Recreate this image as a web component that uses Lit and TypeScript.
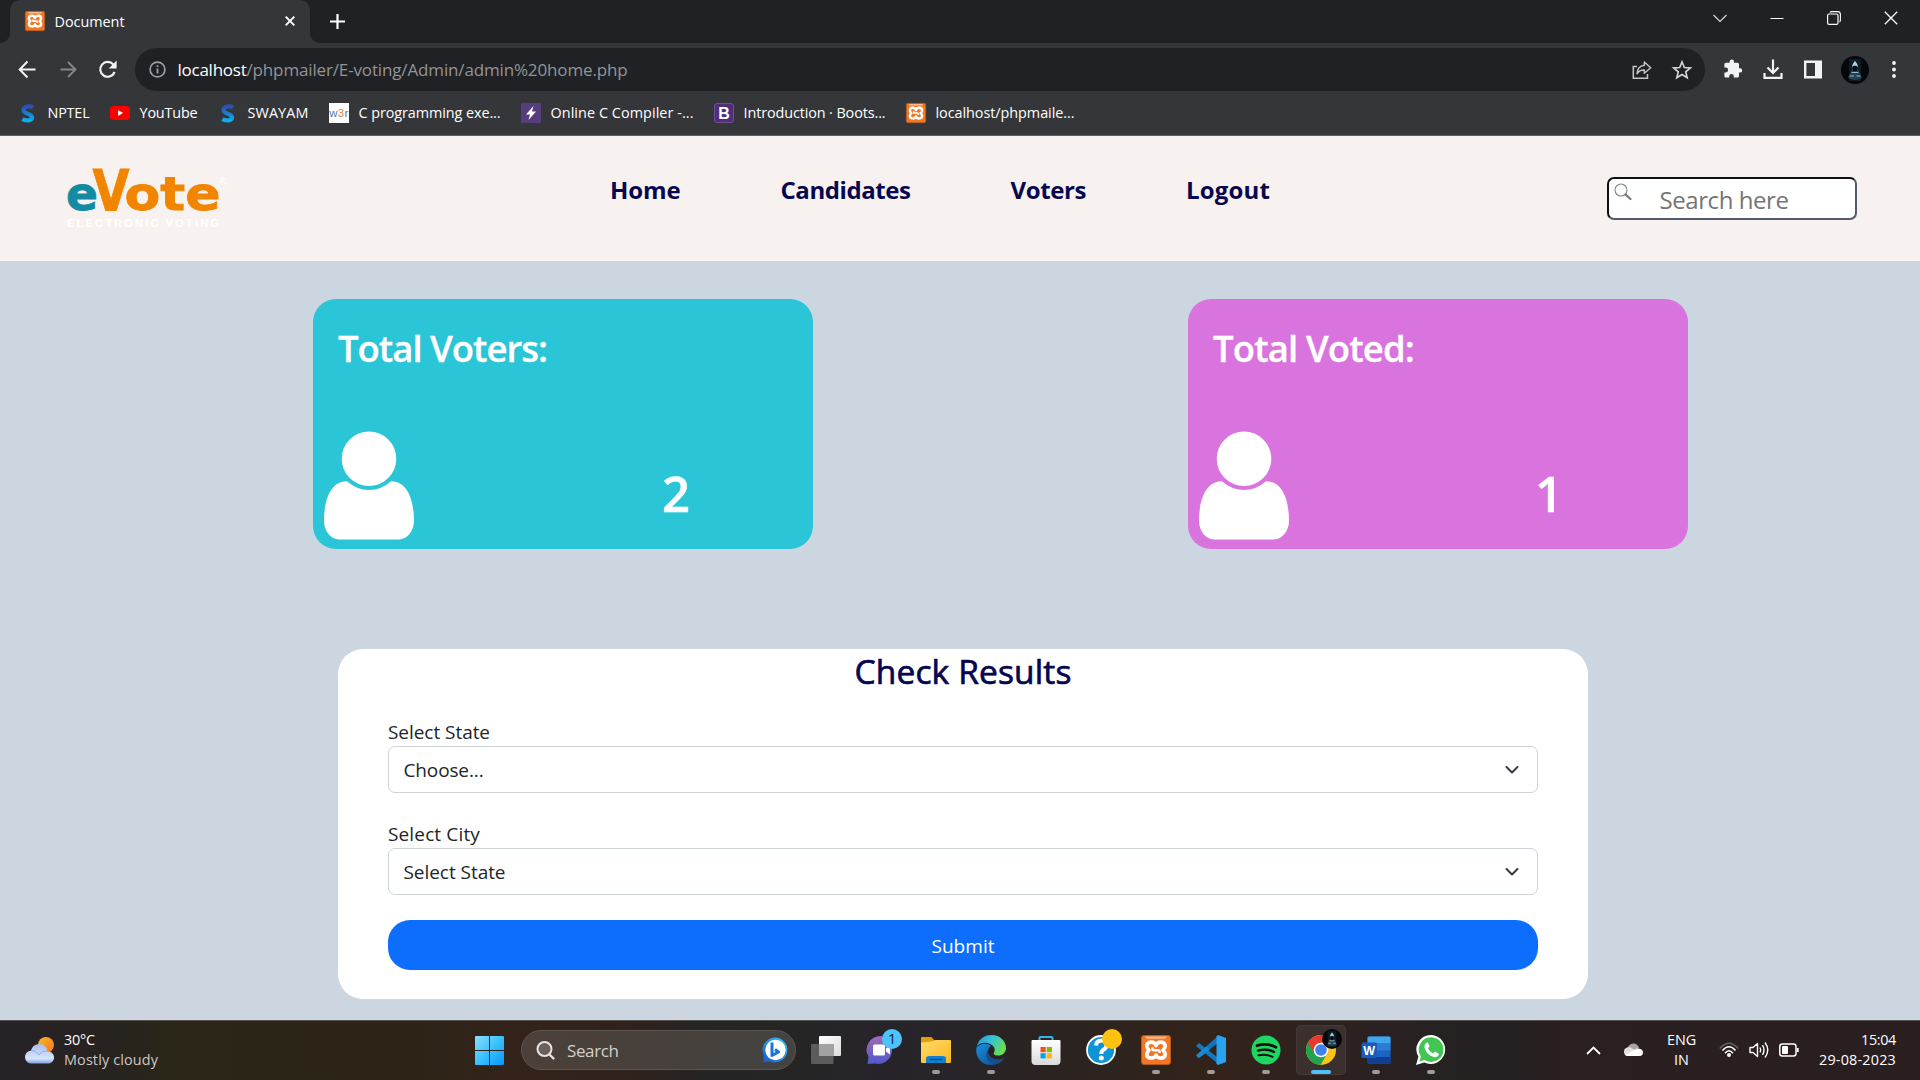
import { LitElement, html, css, svg, nothing } from "lit";
import { customElement, property } from "lit/decorators.js";

/** One line of text whose tracking is tuned so that it fills a set width. */
@customElement("fit-text")
class FitText extends LitElement {
  @property({ type: Number }) w = 0;
  @property() text = "";
  static styles = css`
    :host { display: inline-block; white-space: pre; flex: none; }
  `;
  render() { return html`<span class="t">${this.text}</span>`; }
  updated() {
    const span = this.renderRoot.querySelector(".t") as HTMLElement;
    span.style.letterSpacing = "0px";
    const natural = span.getBoundingClientRect().width;
    span.style.letterSpacing = `${(this.w - natural) / this.text.length}px`;
    this.style.width = `${this.w}px`;
  }
}

const t = (text: string, w: number, cls = "") =>
  html`<fit-text class=${cls} .text=${text} .w=${w}></fit-text>`;

const icon = (w: number, h: number, body: unknown, cls = "") =>
  html`<svg class="ic ${cls}" width=${w} height=${h} viewBox="0 0 ${w} ${h}">${body}</svg>`;

const xampp = (size: number) => html`
  <svg class="ic" width=${size} height=${size} viewBox="0 0 30 30">
    <rect x="0.5" y="0.5" width="29" height="29" rx="2.5" fill="#f37623" stroke="#b65a1c"/>
    <path d="M4 1.5h22l-2 2.2H6z" fill="#f9b98d"/>
    <path d="M15 10.6C13.5 5.6 5.8 6.2 5.8 11.2C5.8 13 7 14 8 15.2C7 16.4 5.8 17.4 5.8 19.2C5.8 24.2 13.5 24.4 15 20C16.5 24.4 24.2 24.2 24.2 19.2C24.2 17.4 23 16.4 22 15.2C23 14 24.2 13 24.2 11.2C24.2 6.2 16.5 5.6 15 10.6Z" fill="none" stroke="#fff" stroke-width="3.6" stroke-linejoin="round"/>
    <path d="M11.4 12.3v1.6q0 1.3 1.3 1.3h4.6q1.3 0 1.3 1.3v1.6" fill="none" stroke="#fff" stroke-width="2.4"/>
  </svg>`;

const swayam = () => icon(20, 20, svg`
  <defs><linearGradient id="sg" x1="0" y1="0" x2="0" y2="1"><stop offset="0" stop-color="#2f4bb5"/><stop offset=".5" stop-color="#1580d0"/><stop offset="1" stop-color="#0cb0ee"/></linearGradient></defs>
  <path d="M15 4.200C12 2.400 5.600 3.200 5.600 7C5.600 11 14 10.200 14 14.200C14 17.800 8 18.200 4.400 16.200" fill="none" stroke="url(#sg)" stroke-width="4.2"/>`);

const hooded = (r: number) => svg`
  <circle cx=${r} cy=${r} r=${r} fill="#05070b"/>
  <g transform="scale(${r / 14})">
    <rect x="8" y="3" width="12" height="22" fill="#0f1c27"/>
    <path d="M14 4.5C11.500 7 10.500 11 10.800 14L7 22Q14 26 21 22L17.200 14C17.500 11 16.500 7 14 4.5Z" fill="#24424f"/>
    <path d="M14 5Q11.500 7.500 11 11Q14 8 17 11Q16.500 7.500 14 5Z" fill="#a9d4e3"/>
    <path d="M11.500 11Q14 9 16.500 11L16 15H12Z" fill="#05070b"/>
    <path d="M10.500 16.500h7M8.500 20h4.500M15.500 20h4" stroke="#8bb7c9" stroke-width="1.200"/>
  </g>`;

const person = () => icon(92, 90, svg`
  <circle cx="46" cy="27.800" r="27.300" fill="#fff"/>
  <path d="M24 50.200C8 50.200 1 68 1 90C1 100 8 108.500 16 108.500H76C84 108.500 91 100 91 90C91 68 84 50.200 68 50.200Q58 59 46 59Q34 59 24 50.200Z" fill="#fff"/>`, "person");

const chevron = () => icon(16, 10, svg`<path d="M2.500 2L8 7.500L13.500 2" fill="none" stroke="#343a40" stroke-width="2" stroke-linecap="round" stroke-linejoin="round"/>`);

@customElement("app-root")
class AppRoot extends LitElement {
  static styles = css`
    :host { display: block; width: 1920px; height: 1080px; overflow: hidden; font-family: "Open Sans", "Noto Sans", sans-serif; }
    * { box-sizing: border-box; }
    .ic { display: block; flex: none; overflow: visible; }
    .page { display: flex; flex-direction: column; height: 1080px; background: #ccd6e0; }

    .browser { height: 136px; flex: none; background: #35363a; border-bottom: 1px solid #5f6064; color: #fff; }
    .tabs { height: 43px; background: #202124; display: flex; align-items: flex-start; }
    .lip { width: 10px; height: 43px; background: #35363a; flex: none; }
    .lip i { display: block; height: 43px; background: #202124; }
    .lip.l i { border-bottom-right-radius: 10px; }
    .lip.r i { border-bottom-left-radius: 10px; }
    .tab { width: 300px; height: 43px; background: #35363a; border-radius: 10px 10px 0 0; display: flex; align-items: center; padding: 0 15px 1px; font-size: 14.4px; }
    .tab fit-text { margin-left: 9.500px; }
    .tab .close { margin-left: auto; }
    .plus { margin: 14px 0 0 10px; }
    .win { margin-left: auto; display: flex; height: 36px; align-items: center; padding-right: 22px; gap: 43px; }
    .bar { height: 53px; display: flex; align-items: center; padding: 0 20px 0 17px; }
    .bar > .nav { display: flex; gap: 20.500px; width: 118px; flex: none; }
    .omni { width: 1570px; flex: none; height: 43px; border-radius: 22px; background: #202124; display: flex; align-items: center; padding: 0 13px 0 14px; font-size: 17px; }
    .omni .host { margin-left: 11.500px; }
    .omni .path { color: #929496; }
    .omni .share { margin-left: auto; margin-right: 20px; }
    .acts { display: flex; align-items: center; gap: 20px; margin-left: 18px; }
    .acts .face { margin-left: -2px; margin-right: 2px; }
    .acts .dots { margin-left: -2px; }
    .marks { height: 33px; display: flex; align-items: center; gap: 20px; padding-left: 18px; font-size: 14.400px; }
    .mark { display: flex; align-items: center; gap: 10px; }
    .mark fit-text { margin: 0 .5px 0 -.5px; }

    .top { height: 125px; flex: none; background: #f7f2ef; display: flex; padding: 0 63px 0 65px; }
    .logo { margin-top: 30px; }
    .menu { display: flex; gap: 100px; margin: 33.500px 0 0 375px; font-size: 24px; font-weight: 700; line-height: 40px; color: #07074f; }
    .search { margin: 41px 0 0 auto; width: 250px; height: 43px; background: #fff; border: 2.500px solid; border-color: #101014 #555a70 #555a70 #101014; border-radius: 7px; display: flex; font-size: 24px; color: #757575; }
    .search .ic { margin: 4px 0 0 5px; }
    .search fit-text { margin-left: 27.500px; line-height: 41px; }

    .stats { display: flex; gap: 375px; margin: 38px 0 0 313px; }
    .card { width: 500px; height: 250px; border-radius: 23px; color: #fff; padding: 23px 0 0 25px; font-weight: 600; display: flex; flex-direction: column; }
    .cyan { background: #2bc5d8; }
    .pink { background: #d974df; }
    .card .title { font-size: 36.500px; line-height: 53px; -webkit-text-stroke: .3px #fff; }
    .row { display: flex; margin-top: 56px; }
    .person { margin-left: -15px; }
    .num { font-size: 49px; line-height: 70px; margin: 26.500px 0 0 247px; -webkit-text-stroke: .5px #fff; }
    .pink .num { margin-left: 245px; }

    .results { margin: 100px 0 0 338px; width: 1250px; height: 350px; border-radius: 25px; background: #fff; padding: 1px 50px 0; display: flex; flex-direction: column; color: #212529; font-size: 19px; }
    .head { display: flex; justify-content: center; font-size: 33.500px; line-height: 43px; color: #07074f; height: 67px; -webkit-text-stroke: .7px #07074f; }
    .head fit-text { height: 43px; }
    .label { line-height: 30px; height: 29px; }
    .select { height: 47px; border: 1px solid #ced4da; border-radius: 7px; display: flex; align-items: center; justify-content: space-between; padding: 0 17px 0 14.500px; margin-bottom: 26px; }
    .select + .submit { margin-top: -1px; }
    .submit { height: 50px; border-radius: 22px; background: #0d6efd; color: #fff; display: flex; align-items: center; justify-content: center; padding-top: 2px; }

    .task { margin-top: auto; height: 60px; flex: none; border-top: 1px solid #55524f; display: flex; align-items: center; color: #fff; font-size: 14.400px; padding-bottom: 1px;
      background: linear-gradient(90deg, #272227 0, #27231f 110px, #2a2618 170px, #2c2417 400px, #33231a 500px, #30221c 630px, #252424 700px, #252526 800px, #27242a 930px, #2b2320 1060px, #33231a 1210px, #2c2120 1340px, #262222 1440px, #252122 1520px, #2a1f21 1560px, #291e20 100%); }
    .weather { display: flex; align-items: center; padding-left: 25px; width: 475px; gap: 9px; }
    .stack { display: flex; flex-direction: column; line-height: 20px; }
    .task .stack { margin-top: -1px; }
    .dim { color: #ccc8c4; }
    .find { width: 275px; height: 40px; border-radius: 20px; margin: 0 15px 0 17px; border: 1px solid #5d5550; background: linear-gradient(90deg, #4c4039, #47403c 50%, #444341); display: flex; align-items: center; padding: 0 7px 0 14px; font-size: 17px; color: #d3cfcc; }
    .find fit-text { margin-left: 12px; }
    .find .bing { margin-left: auto; }
    .apps { display: flex; gap: 5px; margin-left: -10px; }
    .app { width: 50px; height: 50px; border-radius: 5px; display: flex; flex-direction: column; align-items: center; padding-top: 10px; position: relative; }
    .app.on { background: #3b302d; box-shadow: inset 0 0 0 1px #453a37; }
    .dot { width: 8px; height: 4px; border-radius: 2px; background: #a09b9a; margin-top: 5px; }
    .dot.wide { width: 20px; background: #4cc2ff; }
    .badge { position: absolute; left: 26px; top: 4px; width: 20px; height: 20px; border-radius: 50%; display: flex; align-items: center; justify-content: center; line-height: 20px; font-weight: 400; }
    .badge.blue { background: #4cc2ff; color: #10222c; }
    .badge.gold { background: #ffc20e; }
    .tray { margin-left: auto; display: flex; align-items: center; padding-right: 24px; }
    .lang { align-items: center; margin: 0 23px; }
    .net { display: flex; gap: 10px; align-items: center; }
    .clock { align-items: flex-end; margin-left: 20px; }
  `;

  private mark(ic: unknown, label: string, w: number) {
    return html`<div class="mark">${ic}${t(label, w)}</div>`;
  }

  private browser() {
    return html`<div class="browser">
      <div class="tabs">
        <div class="lip l"><i></i></div>
        <div class="tab">${xampp(20)}${t("Document", 70)}
          ${icon(10, 10, svg`<path d="M.7.7L9.300 9.300M9.300.7L.7 9.300" stroke="#fff" stroke-width="1.900"/>`, "close")}
        </div>
        <div class="lip r"><i></i></div>
        ${icon(15, 15, svg`<path d="M7.500 0V15M0 7.500H15" stroke="#fff" stroke-width="2.200"/>`, "plus")}
        <div class="win">
          ${icon(14, 14, svg`<path d="M.5 4L7 10.500L13.500 4" fill="none" stroke="#ddd" stroke-width="1.100"/>`)}
          ${icon(14, 14, svg`<path d="M.5 7.500H13.500" stroke="#fff"/>`)}
          ${icon(14, 14, svg`<rect x=".6" y="3" width="10.400" height="10.400" rx="1.500" fill="none" stroke="#fff" stroke-width="1.200"/><path d="M3 1.500Q3.400.6 5 .6H10.500Q13.400.6 13.400 3.500V9Q13.400 10.600 12.500 11" fill="none" stroke="#fff" stroke-width="1.100"/>`)}
          ${icon(14, 14, svg`<path d="M.8.8L13.200 13.200M13.200.8L.8 13.200" stroke="#fff" stroke-width="1.300"/>`)}
        </div>
      </div>
      <div class="bar">
        <div class="nav">
          ${icon(20, 20, svg`<path d="M18.500 9.500H3M10.500 1.500L2.700 9.500L10.500 17.500" fill="none" stroke="#f1f3f4" stroke-width="2"/>`)}
          ${icon(20, 20, svg`<path d="M2.500 9.500H17M10 2L17.500 9.500L10 17" fill="none" stroke="#85868a" stroke-width="1.900"/>`)}
          ${icon(20, 20, svg`<path d="M16.600 12A7.400 7.400 0 1 1 15.300 4.500L17 6.200" fill="none" stroke="#f1f3f4" stroke-width="2.200"/><path d="M18.600.5V8.500H10.800Z" fill="#f1f3f4"/>`)}
        </div>
        <div class="omni">
          ${icon(17, 17, svg`<circle cx="8.500" cy="8.500" r="7.400" fill="none" stroke="#9aa0a6" stroke-width="1.700"/><path d="M8.500 7.500V12.600M8.500 4.300V6.100" stroke="#9aa0a6" stroke-width="1.800"/>`)}
          ${t("localhost", 69, "host")}${t("/phpmailer/E-voting/Admin/admin%20home.php", 381, "path")}
          ${icon(20, 20, svg`<path d="M5 6.500H1.300V18.300H15.500V14" fill="none" stroke="#c4c7c9" stroke-width="1.500"/><path d="M12.300 2L18.700 7.700L12.300 13.200V10Q7.500 9.800 5 13.800Q5.500 6 12.300 5.200Z" fill="none" stroke="#c4c7c9" stroke-width="1.400" stroke-linejoin="round"/>`, "share")}
          ${icon(20, 20, svg`<path d="M10 1.800L12.300 7.500L18.400 7.900L13.700 11.800L15.200 17.800L10 14.500L4.800 17.800L6.300 11.800L1.600 7.900L7.700 7.500Z" fill="none" stroke="#d5d7d9" stroke-width="1.600"/>`)}
        </div>
        <div class="acts">
          ${icon(20, 20, svg`<path d="M17 8.200h-1V4.300q0-1.500-1.500-1.500H11V1.700a2.200 2.200 0 0 0-4.400 0V2.800H2.900Q1.400 2.800 1.400 4.300V7.600H2.700a2.400 2.400 0 0 1 0 4.800H1.400V16q0 1.500 1.500 1.500H6.200V16.200a2.300 2.300 0 0 1 4.600 0v1.300h3.700q1.500 0 1.500-1.500V12.600h1a2.200 2.200 0 0 0 0-4.400Z" fill="#f1f3f4"/>`)}
          ${icon(20, 20, svg`<path d="M10-.5V12.500M4.500 7.500L10 13L15.500 7.500" fill="none" stroke="#f1f3f4" stroke-width="2.200"/><path d="M1.500 13V17.800H18.500V13" fill="none" stroke="#f1f3f4" stroke-width="2.200"/>`)}
          ${icon(20, 20, svg`<path d="M1 .5H19V18.500H1ZM3.400 2.900V16.100H12V2.900Z" fill="#f1f3f4" fill-rule="evenodd"/>`)}
          ${icon(28, 28, hooded(14), "face")}
          ${icon(10, 20, svg`<g fill="#f1f3f4"><circle cx="5" cy="3" r="1.900"/><circle cx="5" cy="9.500" r="1.900"/><circle cx="5" cy="16" r="1.900"/></g>`, "dots")}
        </div>
      </div>
      <div class="marks">
        ${this.mark(swayam(), "NPTEL", 42)}
        ${this.mark(icon(20, 20, svg`<rect x="0" y="3" width="20" height="14" rx="3.500" fill="#f00"/><path d="M8 7L13 10L8 13Z" fill="#fff"/>`), "YouTube", 58)}
        ${this.mark(swayam(), "SWAYAM", 61)}
        ${this.mark(icon(20, 20, svg`<rect width="20" height="20" fill="#fff"/><text y="14" font-family="Liberation Sans" font-size="11.500" fill="#4d79b0"><tspan x=".3">w</tspan><tspan x="8.800" fill="#f08040">3</tspan><tspan x="15.500">r</tspan></text>`), "C programming exe...", 142)}
        ${this.mark(icon(20, 20, svg`<rect width="20" height="20" fill="#563d7c"/><path d="M12.500 3L5 11.500H9L7.500 17L15 8.500H11Z" fill="#fff"/>`), "Online C Compiler -...", 143)}
        ${this.mark(icon(20, 20, svg`<rect x=".5" y=".5" width="19" height="19" rx="2.500" fill="#4f2f7c" stroke="#6b5190"/><text x="10" y="15.500" text-anchor="middle" font-family="Liberation Sans" font-weight="700" font-size="16" fill="#fff">B</text>`), "Introduction · Boots...", 142)}
        ${this.mark(xampp(20), "localhost/phpmaile...", 139)}
      </div>
    </div>`;
  }

  private header() {
    return html`<header class="top">
      ${icon(170, 65, svg`
        <g font-family="DejaVu Sans" font-weight="700" stroke-width=".8">
          <text x="1" y="44.200" font-size="46" textLength="32" lengthAdjust="spacingAndGlyphs" fill="#138ca3" stroke="#138ca3">e</text>
          <text x="27.500" y="44.500" font-size="56.500" textLength="37" lengthAdjust="spacingAndGlyphs" fill="#f28500" stroke="#f28500">V</text>
          <text x="59.500" y="44.200" font-size="46" textLength="96" lengthAdjust="spacingAndGlyphs" fill="#f28500" stroke="#f28500">ote</text>
        </g>
        <text x="2" y="60.500" font-family="Liberation Sans Narrow, Liberation Sans" font-weight="700" font-size="11" textLength="152" fill="#fff">ELECTRONIC VOTING</text>
        <text x="154" y="18.500" font-family="Liberation Sans" font-size="11" fill="#fff">®</text>`, "logo")}
      <nav class="menu">${t("Home", 70.5)}${t("Candidates", 130)}${t("Voters", 75.5)}${t("Logout", 84)}</nav>
      <div class="search">
        ${icon(18, 18, svg`<circle cx="7" cy="7" r="6" fill="none" stroke="#858585" stroke-width="1.100"/><path d="M11.500 11.500L16.500 16" stroke="#777" stroke-width="2.200" stroke-linecap="round"/>`)}
        ${t("Search here", 129)}
      </div>
    </header>`;
  }

  private card(kind: string, title: string, w: number, n: string) {
    return html`<section class="card ${kind}">
      ${t(title, w, "title")}
      <div class="row">${person()}<span class="num">${n}</span></div>
    </section>`;
  }

  private app(body: unknown, dot = "", badge: unknown = nothing) {
    return html`<div class="app ${dot === "wide" ? "on" : ""}">
      ${icon(30, 30, body)}
      ${dot ? html`<i class="dot ${dot}"></i>` : nothing}${badge}
    </div>`;
  }

  private taskbar() {
    return html`<footer class="task">
      <div class="weather">
        ${icon(30, 30, svg`
          <defs><linearGradient id="cl" x1="0" y1="0" x2="0" y2="1"><stop offset="0" stop-color="#a9c0ef"/><stop offset=".75" stop-color="#d7e4fa"/><stop offset="1" stop-color="#7d9fe0"/></linearGradient>
          <linearGradient id="su" x1="0" y1="0" x2="1" y2="1"><stop offset="0" stop-color="#fbb52c"/><stop offset="1" stop-color="#f5761a"/></linearGradient></defs>
          <circle cx="21" cy="10" r="8" fill="url(#su)"/>
          <path d="M7 28.500a6.500 6.500 0 0 1-1-13A8.500 8.500 0 0 1 21 12.500q1.500 2 1 4a6 6 0 0 1 2 12Z" fill="url(#cl)"/>
          <path d="M6 15.500q5-.5 8 4.500q3-5 8-4" fill="none" stroke="#8fabe6" stroke-width=".9"/>`)}
        <div class="stack">${t("30°C", 31)}${t("Mostly cloudy", 94, "dim")}</div>
      </div>
      ${icon(29, 29, svg`
        <defs><linearGradient id="wi" gradientUnits="userSpaceOnUse" x1="0" y1="0" x2="29" y2="29"><stop offset="0" stop-color="#8fdcff"/><stop offset=".5" stop-color="#39c2fc"/><stop offset="1" stop-color="#0a94fa"/></linearGradient></defs>
        <path d="M1 0H14V14H0V1Q0 0 1 0ZM15 0H28Q29 0 29 1V14H15ZM0 15H14V29H1Q0 29 0 28ZM15 15H29V28Q29 29 28 29H15Z" fill="url(#wi)"/>`)}
      <div class="find">
        ${icon(19, 19, svg`<circle cx="8.500" cy="8" r="7" fill="#6b605a" stroke="#e6e4e2" stroke-width="2"/><path d="M13.500 13.500L17.500 17.500" stroke="#e6e4e2" stroke-width="2.400" stroke-linecap="round"/>`)}
        ${t("Search", 51.5)}
        ${icon(26, 26, svg`
          <defs><linearGradient id="bi" x1="1" y1="0" x2="0" y2="1"><stop offset="0" stop-color="#35c8f2"/><stop offset="1" stop-color="#1a53cf"/></linearGradient></defs>
          <path d="M13 .5A12.500 12.500 0 1 1 8 24.500L.8 25.500L2 19A12.500 12.500 0 0 1 13 .5Z" fill="url(#bi)"/><circle cx="13.500" cy="13" r="10.200" fill="#fff"/>
          <path d="M10 5.500V18.500L16.500 15L13 12.500" fill="none" stroke="#1b73dd" stroke-width="3" stroke-linejoin="round"/>`, "bing")}
      </div>
      <div class="apps">
        ${this.app(svg`
          <defs><linearGradient id="tv" x1="0" y1="0" x2="1" y2="1"><stop offset="0" stop-color="#fff"/><stop offset="1" stop-color="#dcdcdc"/></linearGradient></defs>
          <rect x="8" y="1" width="22" height="20" rx="1" fill="url(#tv)"/><rect x="0" y="9" width="22.500" height="20" rx="1" fill="#5c5c5c"/><rect x="8" y="9" width="14.500" height="12" fill="#a2a2a2"/>`)}
        ${this.app(svg`
          <defs><linearGradient id="ch" x1="0" y1="0" x2="0" y2="1"><stop offset="0" stop-color="#a06ab4"/><stop offset="1" stop-color="#5059c9"/></linearGradient></defs>
          <path d="M15 1A14 14 0 1 1 9 28.600L1.500 29L2.500 22A14 14 0 0 1 15 1Z" fill="url(#ch)"/>
          <rect x="7" y="9.500" width="12" height="11" rx="1.500" fill="#fff"/><path d="M20 13.500L24 10.500V19.500L20 16.500Z" fill="#fff"/>`, "", html`<b class="badge blue">${t("1", 8)}</b>`)}
        ${this.app(svg`
          <defs><linearGradient id="fo" x1="0" y1="0" x2="1" y2="1"><stop offset="0" stop-color="#ffda6b"/><stop offset="1" stop-color="#fbb81a"/></linearGradient></defs>
          <path d="M0 3Q0 2 1 2H10.500L13 5V9H0Z" fill="#e29d0b"/><path d="M0 7.500L11 6.500L14 5H29Q30 5 30 6V27Q30 28 29 28H1Q0 28 0 27Z" fill="url(#fo)"/>
          <path d="M5 28V24Q5 21 8 21H22Q25 21 25 24V28Z" fill="#1180d2"/><path d="M9 24.500H21" stroke="#0a4f93" stroke-width="1.500"/>`, "d")}
        ${this.app(svg`
          <defs><linearGradient id="e1" x1="0" y1="0" x2="1" y2=".5"><stop offset="0" stop-color="#2593dd"/><stop offset=".5" stop-color="#35c1d8"/><stop offset="1" stop-color="#67df52"/></linearGradient>
          <linearGradient id="e2" x1="0" y1="0" x2="1" y2="1"><stop offset="0" stop-color="#1a8edb"/><stop offset="1" stop-color="#0c4a92"/></linearGradient></defs>
          <path d="M.5 12C3 3 9 0 15.500 0C24 0 30 6 30 13C30 18 26 20.500 22 20.500C18.500 20.500 17 19 18 17.500C20 14 18 9.500 11.500 8C6 7 2 9 .5 12Z" fill="url(#e1)"/>
          <path d="M.3 13C3 8 12 7.500 15 11C11 13 10 22 17 25C21.500 26.500 25 25 28 23C25 28 20 30 15 30C6 30-.7 23 .3 13Z" fill="url(#e2)"/>
          <path d="M11.500 15C8 21 12 29 19 29.500C23 28.500 26.500 26 28 23C22 26 12 24 11.500 15Z" fill="#174d8b"/>`, "d")}
        ${this.app(svg`
          <defs><linearGradient id="st" x1="0" y1="0" x2="0" y2="1"><stop offset="0" stop-color="#fff"/><stop offset="1" stop-color="#dadada"/></linearGradient></defs>
          <path d="M8.500 7V3Q8.500 2 9.500 2H20.500Q21.500 2 21.500 3V7" fill="none" stroke="#35b3ee" stroke-width="2"/>
          <path d="M.5 6Q.5 5 1.500 5H28.500Q29.500 5 29.500 6V26Q29.500 30 25.500 30H4.500Q.5 30 .5 26Z" fill="url(#st)"/>
          <rect x="9.500" y="12" width="5.200" height="5.200" fill="#f25022"/><rect x="15.700" y="12" width="5.200" height="5.200" fill="#7fba00"/><rect x="9.500" y="18.200" width="5.200" height="5.200" fill="#00a4ef"/><rect x="15.700" y="18.200" width="5.200" height="5.200" fill="#ffb900"/>`)}
        ${this.app(svg`<circle cx="15" cy="15" r="14" fill="#0b95d6" stroke="#fff" stroke-width="1.800"/><path d="M10 10.500Q10.500 5.500 15.500 5.500Q20.500 5.500 20.500 10Q20.500 13 17.500 14.700Q15.300 16 15.300 19" fill="none" stroke="#fff" stroke-width="4"/><circle cx="15.300" cy="23" r="2.500" fill="#fff"/>`, "", html`<b class="badge gold"></b>`)}
        <div class="app">${xampp(30)}<i class="dot"></i></div>
        ${this.app(svg`
          <path d="M0 11L3 8L23 23.500V29.500Z" fill="#1278c0"/><path d="M0 20.500L3 23L23 7V0Z" fill="#0e74bd"/><path d="M0 20.500L3 23L14 14.500L10 11.500Z" fill="#1b8ad6"/>
          <path d="M22 0L30 3V27L22 30L20.500 28.500V1.500Z" fill="#27a3f0"/>`, "d")}
        ${this.app(svg`<circle cx="15" cy="15" r="14.500" fill="#1ed760"/><g fill="none" stroke="#111" stroke-linecap="round"><path d="M6 10.700Q15.500 7.500 25 12.200" stroke-width="2.800"/><path d="M7 15.700Q15.500 13 23 17" stroke-width="2.400"/><path d="M7.500 20.300Q15 18.500 21.500 21.800" stroke-width="2"/></g>`, "d")}
        ${this.app(svg`
          <circle cx="15" cy="15" r="15" fill="#fcc31e"/>
          <path d="M15 15L2 7.500A15 15 0 0 0 14.500 30L22 17Z" fill="#1fa350"/>
          <path d="M2 7.500A15 15 0 0 1 28 7.500H15L8.500 18.700Z" fill="#e8392c"/>
          <circle cx="15" cy="15" r="7.300" fill="#fff"/><circle cx="15" cy="15" r="5.800" fill="#3f80ee"/>
          <g transform="translate(16 -6)">${hooded(10)}</g>`, "wide")}
        ${this.app(svg`
          <rect x="6.500" y="1.500" width="23" height="27" rx="1.500" fill="#1d63c4"/><path d="M6.500 3Q6.500 1.500 8 1.500H28Q29.500 1.500 29.500 3V8.500H6.500Z" fill="#41a5ee"/><rect x="6.500" y="8.500" width="23" height="7" fill="#2b7cd3"/><path d="M6.500 22H29.500V27Q29.500 28.500 28 28.500H8Q6.500 28.500 6.500 27Z" fill="#103f91"/>
          <rect x=".5" y="7.500" width="15.500" height="15.500" rx="1.500" fill="#185abd"/><text x="8.200" y="19.500" text-anchor="middle" font-family="Liberation Sans" font-weight="700" font-size="12.500" fill="#fff">W</text>`, "d")}
        ${this.app(svg`
          <path d="M15.500 0A14.500 14.500 0 1 1 8.300 27.500L0 30L2.400 21.800A14.500 14.500 0 0 1 15.500 0Z" fill="#fff"/>
          <path d="M15.500 2.300A12.300 12.300 0 1 1 8.600 25L3.300 26.600L4.900 21.500A12.300 12.300 0 0 1 15.500 2.300Z" fill="#43c553"/>
          <path d="M11 7.500Q8 9 8.500 12.500Q10.500 20 18.500 22.300Q22 22.300 23 19L19 16.500L17 18.500Q13.500 17 12 13.300L13.500 11.500L12 7.500Z" fill="#fff"/>`, "d")}
      </div>
      <div class="tray">
        ${icon(15, 9, svg`<path d="M1 8L7.500 1.500L14 8" fill="none" stroke="#fff" stroke-width="1.800"/>`)}
        <svg class="ic" width="43" height="14" viewBox="-22 0 43 14">
          <path d="M4 7Q5.500 0 11 .5Q15 1 16 5L10 9Z" fill="#a8a4a5"/><path d="M4 13A4.500 4.500 0 0 1 4 4.500Q6 3.500 8.500 5L19 11Q18 13 16 13Z" fill="#e0dedf"/><path d="M2 12L14 5.500Q20 5.500 20 9.500Q20 13 16 13H4Z" fill="#fff"/>
        </svg>
        <div class="stack lang">${t("ENG", 29)}${t("IN", 15)}</div>
        <div class="net">
          ${icon(20, 16, svg`<g fill="none" stroke="#fff" stroke-width="1.500"><path d="M.8 6.500Q10-4 19.200 6.500" stroke="#6a6061"/><path d="M3.500 8.500Q10 1 16.500 8.500"/><path d="M6 11.200Q10 6.500 14 11.200"/></g><circle cx="10" cy="13" r="2" fill="#fff"/>`)}
          ${icon(20, 18, svg`<path d="M1 6.500H4L8.500 2.500V15.500L4 11.500H1Z" fill="none" stroke="#fff" stroke-width="1.400" stroke-linejoin="round"/><path d="M11 6.500Q12.500 9 11 11.500M13.500 4.200Q16.500 9 13.500 13.800M16 1.500Q21.500 9 16 16.500" fill="none" stroke="#fff" stroke-width="1.400"/>`)}
          ${icon(20, 14, svg`<rect x=".8" y=".9" width="16.200" height="12.200" rx="2.500" fill="none" stroke="#fff" stroke-width="1.500"/><rect x="3" y="3" width="6" height="8" rx="1" fill="#fff"/><path d="M18.700 5V9" stroke="#fff" stroke-width="2"/>`)}
        </div>
        <div class="stack clock">${t("15:04", 35)}${t("29-08-2023", 77)}</div>
      </div>
    </footer>`;
  }

  render() {
    return html`<div class="page">
      ${this.browser()}${this.header()}
      <div class="stats">
        ${this.card("cyan", "Total Voters:", 209, "2")}
        ${this.card("pink", "Total Voted:", 201, "1")}
      </div>
      <section class="results">
        <div class="head">${t("Check Results", 217)}</div>
        <div class="label">${t("Select State", 102)}</div>
        <div class="select">${t("Choose...", 80)}${chevron()}</div>
        <div class="label">${t("Select City", 92)}</div>
        <div class="select">${t("Select State", 102)}${chevron()}</div>
        <div class="submit">${t("Submit", 63)}</div>
      </section>
      ${this.taskbar()}
    </div>`;
  }
}
